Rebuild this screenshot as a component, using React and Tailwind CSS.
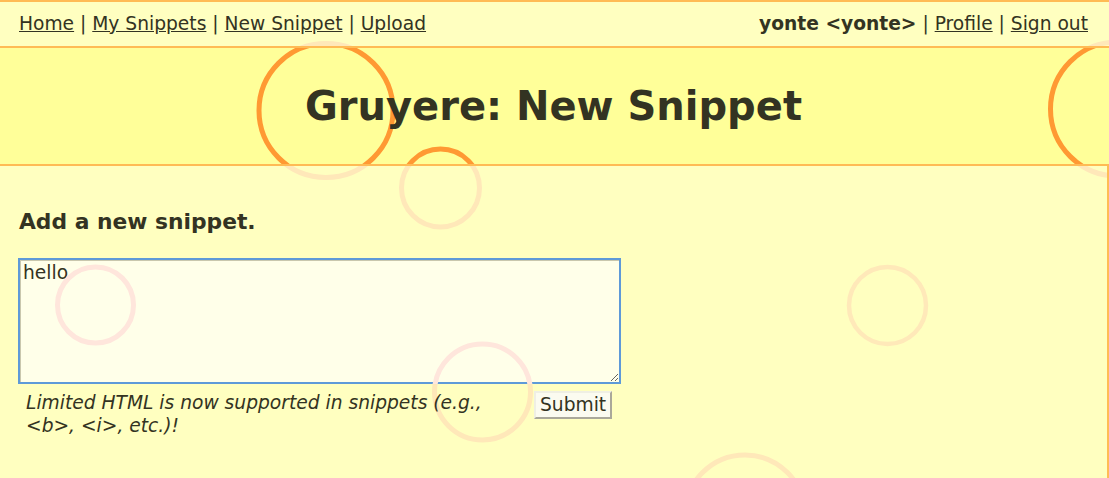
import React, { useEffect, useRef } from 'react';

const font = { fontFamily: '"DejaVu Sans", Verdana, sans-serif' };

// faded cheese holes behind the whole page
const Holes = () => (
  <svg className="absolute inset-0 w-full h-full" width="1109" height="478" fill="none" strokeWidth="5">
    <circle cx="326" cy="110.5" r="67" stroke="#ffe8b9" />
    <circle cx="440.5" cy="188" r="39" stroke="#ffe8b9" />
    <circle cx="1117.5" cy="109" r="67" stroke="#ffe8b9" />
    <circle cx="887.5" cy="305.5" r="38.5" stroke="#ffe9b9" strokeWidth="4.5" />
    <circle cx="482.5" cy="392" r="48" stroke="#ffe8b9" />
    <circle cx="745" cy="515" r="60" stroke="#ffe8b9" />
  </svg>
);

const Menu = () => (
  <div className="flex justify-between items-center h-[48px] border-y-2 border-[#ffbb55] pl-[19px] pr-[21px] text-[18.66px]">
    <div>
      <a href="#" className="underline">Home</a> | <a href="#" className="underline">My Snippets</a> |{' '}
      <a href="#" className="underline">New Snippet</a> | <a href="#" className="underline">Upload</a>
    </div>
    <div>
      <span className="font-bold">yonte &lt;yonte&gt;</span> | <a href="#" className="underline">Profile</a> |{' '}
      <a href="#" className="underline">Sign out</a>
    </div>
  </div>
);

const Header = () => (
  <div className="relative h-[118px] bg-[#ffff99] border-b-2 border-[#ffbb55] overflow-hidden flex items-center justify-center">
    <svg className="absolute left-0 top-0" width="1109" height="118" fill="none" stroke="#ff9933" strokeWidth="5">
      <circle cx="326" cy="62.5" r="67" />
      <circle cx="440.5" cy="140" r="39" />
      <circle cx="1117.5" cy="61" r="67" />
    </svg>
    <h1 className="relative text-[40px] font-bold leading-none ml-[-2px]">Gruyere: New Snippet</h1>
  </div>
);

export default function App() {
  const ta = useRef(null);

  useEffect(() => {
    if (ta.current) {
      ta.current.focus();
      ta.current.setSelectionRange(6, 6);
    }
  }, []);

  return (
    <div className="relative w-[1109px] h-[478px] overflow-hidden bg-[#ffffc0] text-[#333322]" style={font}>
      <Holes />
      <div className="relative flex flex-col h-full">
        <Menu />
        <Header />
        <div className="flex-1 border-r-2 border-[#ffbb55] pl-[18px] pt-[43px]">
          <h3 className="text-[21.8px] font-bold leading-[26px] ml-px">Add a new snippet.</h3>

          <div className="relative mt-[23px] w-[603px] h-[126px]">
            <textarea
              ref={ta}
              defaultValue={'hello\n'}
              className="block w-full h-full bg-[#ffffe9] border-2 border-[#5e9ad8] shadow-[inset_1px_1px_0_#c9c7ad] outline-none px-[3px] py-[2px] text-[18.66px] leading-[22px] text-[#333322] caret-[#333322]"
              style={font}
            />
            <svg className="absolute left-0 top-0 pointer-events-none" width="603" height="126" fill="none" stroke="#ffe6dc" strokeWidth="5">
              <circle cx="77.5" cy="47" r="38" />
              <circle cx="464.5" cy="134" r="48" />
            </svg>
          </div>

          <div className="flex items-start w-[603px] mt-[7px]">
            <div className="w-[508px] pl-[8px] italic text-[18.66px] leading-[23px]">
              Limited HTML is now supported in snippets (e.g., &lt;b&gt;, &lt;i&gt;, etc.)!
            </div>
            <button
              className="ml-[8px] h-[28px] px-[4px] bg-[#fbfbf0] border-2 border-t-[#efefe4] border-l-[#efefe4] border-r-[#aaa89a] border-b-[#aaa89a] text-[18.66px] leading-none text-[#333322]"
              style={font}
            >
              Submit
            </button>
          </div>
        </div>
      </div>
    </div>
  );
}
